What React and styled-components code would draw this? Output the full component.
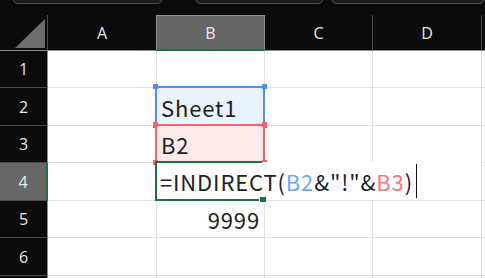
import React from 'react'
import styled, { createGlobalStyle } from 'styled-components';

const GlobalStyle = createGlobalStyle`
    html, body {
        margin: 0;
        padding: 0;
        background: #0b0b0b;
        overflow: hidden;
    }
`;

const GREEN = '#1e7145';
const BLUE = '#4f8ef6';
const RED = '#f2616c';

const Page = styled.div`
    width: 485px;
    height: 278px;
    overflow: hidden;
    background: #0b0b0b;
`;

const TopStrip = styled.div`
    height: 15px;
    display: flex;
    overflow: hidden;
`;

const StripBox = styled.div`
    margin-left: ${p => p.left}px;
    width: ${p => p.width}px;
    height: 10px;
    margin-top: -6px;
    box-sizing: border-box;
    background: #1c1c1c;
    border: 1px solid #4e4e4e;
    border-radius: 0 0 6px 6px;
`;

const Grid = styled.div`
    display: grid;
    grid-template-columns: 48px 109px 108px 108px 109px 40px;
    grid-template-rows: 36px 37px 38px 37px 38px 37px 38px 20px;
`;

const Corner = styled.div`
    background: #0b0b0b;
    border-right: 1px solid #4a4a4a;
    border-bottom: 1px solid #8c8c8c;
    box-sizing: border-box;
    svg { display: block; }
`;

const ColHead = styled.div`
    box-sizing: border-box;
    display: flex;
    align-items: center;
    justify-content: center;
    font-family: "Open Sans", "Noto Sans", sans-serif;
    font-size: 16px;
    color: #e8e8e8;
    background: ${p => (p.active ? '#666666' : '#0b0b0b')};
    border-right: 1px solid ${p => (p.active ? '#8f8f8f' : '#4a4a4a')};
    border-left: ${p => (p.active ? '1px solid #8f8f8f' : 'none')};
    border-top: ${p => (p.active ? '1px solid #8f8f8f' : 'none')};
    border-bottom: ${p => (p.active ? `2px solid ${GREEN}` : '1px solid #8c8c8c')};
    margin-left: ${p => (p.active ? '-1px' : '0')};
`;

const RowHead = styled.div`
    box-sizing: border-box;
    display: flex;
    align-items: center;
    justify-content: center;
    font-family: "Open Sans", "Noto Sans", sans-serif;
    font-size: 16px;
    color: #e8e8e8;
    background: ${p => (p.active ? '#676767' : '#0b0b0b')};
    border-bottom: 1px solid #4a4a4a;
    border-right: ${p => (p.active ? `2px solid ${GREEN}` : '1px solid #8c8c8c')};
`;

const Cell = styled.div`
    box-sizing: border-box;
    background: #ffffff;
    border-right: 1px solid #e1e1e1;
    border-bottom: 1px solid #e1e1e1;
    position: relative;
    display: flex;
    align-items: center;
    justify-content: ${p => (p.right ? 'flex-end' : 'flex-start')};
    padding: 0 4px 0 4px;
    font-family: "Noto Sans CJK JP", "Noto Sans", sans-serif;
    font-size: 22px;
    letter-spacing: 0.85px;
    color: #222222;
    white-space: nowrap;
`;

const RefBox = styled.div`
    position: absolute;
    left: -2px;
    top: -2px;
    right: -1px;
    bottom: -1px;
    border: 2px solid ${p => p.color};
    background: ${p => p.fill};
    z-index: ${p => p.z};
`;

const Handle = styled.span`
    position: absolute;
    width: 5px;
    height: 5px;
    background: ${p => p.color};
    ${p => (p.x === 'l' ? 'left: -4px;' : 'right: -4px;')}
    ${p => (p.y === 't' ? 'top: -4px;' : 'bottom: -4px;')}
`;

const CellText = styled.span`
    position: relative;
    z-index: 5;
`;

const Editor = styled.div`
    position: absolute;
    left: -1px;
    top: -1px;
    width: 325px;
    bottom: 0;
    background: #ffffff;
    z-index: 4;
    display: flex;
    align-items: center;
    padding-left: 4px;
    box-sizing: border-box;
`;

const EditFrame = styled.div`
    position: absolute;
    left: -2px;
    top: -2px;
    right: 2px;
    bottom: -1px;
    border: 2px solid ${GREEN};
    border-right: none;
    z-index: 6;
`;

const FillHandle = styled.span`
    position: absolute;
    right: -5px;
    bottom: -4px;
    width: 6px;
    height: 5px;
    background: ${GREEN};
    border: 1px solid #ffffff;
`;

const Ref = styled.span`
    color: ${p => p.color};
`;

const Caret = styled.span`
    display: inline-block;
    width: 1px;
    height: 34px;
    background: #111111;
    margin-left: 3px;
`;

const cols = ['A', 'B', 'C', 'D', ''];

function Corners({ color }) {
    return (
        <>
            <Handle color={color} x="l" y="t" />
            <Handle color={color} x="r" y="t" />
            <Handle color={color} x="l" y="b" />
            <Handle color={color} x="r" y="b" />
        </>
    );
}

function renderCell(row, col) {
    const key = `${row}-${col}`;
    if (col === 1 && row === 2) {
        return (
            <Cell key={key}>
                <RefBox color={BLUE} fill="#eaf2fe" z={2}><Corners color={BLUE} /></RefBox>
                <CellText>Sheet1</CellText>
            </Cell>
        );
    }
    if (col === 1 && row === 3) {
        return (
            <Cell key={key}>
                <RefBox color={RED} fill="#feeaeb" z={3}><Corners color={RED} /></RefBox>
                <CellText>B2</CellText>
            </Cell>
        );
    }
    if (col === 1 && row === 4) {
        return (
            <Cell key={key}>
                <Editor>
                    =INDIRECT(<Ref color="#6fa5f7">B2</Ref>&amp;"!"&amp;<Ref color="#f37880">B3</Ref>)
                    <Caret />
                </Editor>
                <EditFrame><FillHandle /></EditFrame>
            </Cell>
        );
    }
    if (col === 1 && row === 5) {
        return <Cell key={key} right>9999</Cell>;
    }
    return <Cell key={key} />;
}

export default function App() {
    const rows = [1, 2, 3, 4, 5, 6, 7];
    return (
        <Page>
            <GlobalStyle />
            <TopStrip>
                <StripBox left={12} width={157} />
                <StripBox left={32} width={133} />
                <StripBox left={7} width={160} />
            </TopStrip>
            <Grid>
                <Corner>
                    <svg width="47" height="35">
                        <polygon points="15,33 45,33 45,4" fill="#6d6d6d" />
                    </svg>
                </Corner>
                {cols.map((c, i) => (
                    <ColHead key={c || 'e'} active={i === 1}>{c}</ColHead>
                ))}
                {rows.map(r => (
                    <React.Fragment key={r}>
                        <RowHead active={r === 4}>{r < 7 ? r : ''}</RowHead>
                        {cols.map((c, i) => renderCell(r, i))}
                    </React.Fragment>
                ))}
            </Grid>
        </Page>
    );
}
